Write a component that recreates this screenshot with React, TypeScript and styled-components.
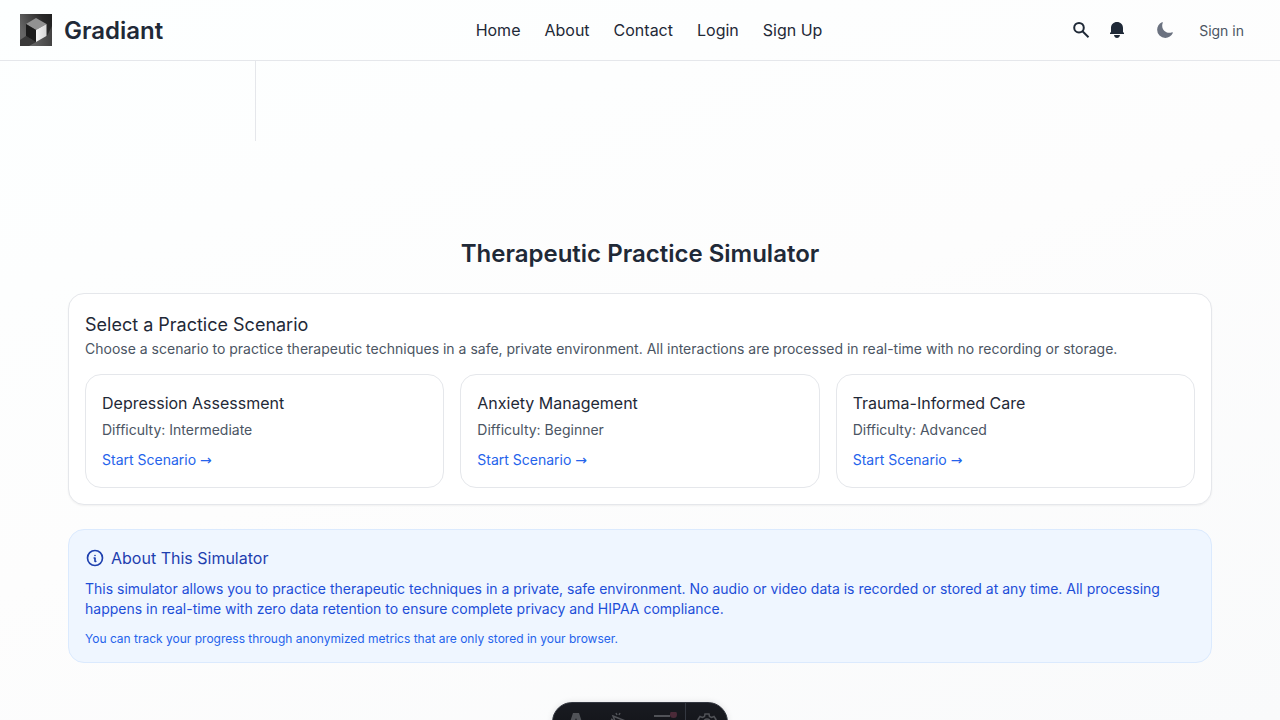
import React from "react";
import styled, { createGlobalStyle } from "styled-components";
import { IoMoon } from "react-icons/io5";
import { TbInfoCircle } from "react-icons/tb";

const GlobalStyle = createGlobalStyle`
  *, *::before, *::after { box-sizing: border-box; }
  html { min-height: 100%; background: #fff; }
  body {
    margin: 0;
    min-height: 100vh;
    background: linear-gradient(160deg, #fdffff 0%, #fdfdfd 50%, #f9fafb 100%);
    color: #1f2937;
    font: 16px/24px Inter, "Liberation Sans", sans-serif;
  }
  h1, h2, h3, p { margin: 0; font-weight: 400; }
  a { color: inherit; text-decoration: none; }
`;

const Header = styled.header`
  display: grid;
  grid-template-columns: 1fr auto 1fr;
  align-items: center;
  height: 61px;
  padding: 0 20px;
  border-bottom: 1px solid #e5e7eb;
`;

const Brand = styled.a`
  display: flex;
  align-items: center;
  gap: 12px;
  font-size: 24px;
  line-height: 32px;
  font-weight: 600;
`;

const BrandName = styled.span`
  padding-top: 1px;
`;

const Nav = styled.nav`
  display: flex;
  gap: 24px;
  padding-left: 18px;
`;

const Actions = styled.div`
  display: flex;
  align-items: center;
  justify-content: flex-end;
`;

const IconButton = styled.button<{ $muted?: boolean }>`
  display: flex;
  align-items: center;
  justify-content: center;
  width: 36px;
  height: 36px;
  margin-left: ${(p) => (p.$muted ? "12px" : "0")};
  padding: 0;
  border: 0;
  background: none;
  color: ${(p) => (p.$muted ? "#6b7280" : "#1f2937")};
  cursor: pointer;
`;

const SignIn = styled.a`
  padding: 9px 16px 7px;
  color: #4b5563;
  font-size: 14px;
  line-height: 20px;
`;

const SideRail = styled.aside`
  width: 256px;
  max-width: 100%;
  height: 80px;
  border-right: 1px solid #e5e7eb;
`;

const Main = styled.main`
  padding: 97px 68px 56px;
`;

const PageTitle = styled.h1`
  && { font-weight: 600; }
  margin-bottom: 23px;
  font-size: 24px;
  line-height: 32px;
  text-align: center;
`;

const Panel = styled.section`
  padding: 16px;
  border: 1px solid #e5e7eb;
  border-radius: 16px;
  background: #fff;
  box-shadow: 0 1px 2px rgba(0, 0, 0, 0.05);
`;

const PanelTitle = styled.h2`
  font-size: 18px;
  line-height: 29px;
`;

const Muted = styled.p`
  color: #4b5563;
  font-size: 14px;
  line-height: 20px;
`;

const Scenarios = styled.div`
  display: grid;
  grid-template-columns: repeat(3, 1fr);
  gap: 16px;
  margin-top: 15px;
`;

const Scenario = styled.article`
  display: flex;
  flex-direction: column;
  align-items: flex-start;
  padding: 16px 16px 15px;
  border: 1px solid #e5e7eb;
  border-radius: 16px;
`;

const ScenarioTitle = styled.h3`
  margin-bottom: 5px;
  font-size: 16px;
  line-height: 24px;
`;

const StartButton = styled.button`
  height: 24px;
  margin-top: 8px;
  padding: 0;
  border: 0;
  background: none;
  color: #2563eb;
  font: 14px/24px Inter, "Liberation Sans", sans-serif;
  cursor: pointer;
`;

const Arrow = styled.span`
  font-family: "DejaVu Sans", sans-serif;
  line-height: 20px;
`;

const Notice = styled.section`
  margin-top: 24px;
  padding: 16px 16px 15px;
  border: 1px solid #dbeafe;
  border-radius: 16px;
  background: #eff6ff;
  color: #1d4ed8;
  font-size: 14px;
  line-height: 20px;
`;

const NoticeTitle = styled.h2`
  display: flex;
  align-items: center;
  gap: 6px;
  margin-bottom: 9px;
  color: #1e40af;
  font-size: 16px;
  line-height: 24px;
`;

const NoticeSmall = styled.p`
  margin-top: 12px;
  color: #2563eb;
  font-size: 12px;
  line-height: 16px;
`;

const DevBar = styled.div`
  position: fixed;
  left: 50%;
  bottom: -22px;
  display: flex;
  height: 40px;
  overflow: hidden;
  transform: translateX(-50%);
  border: 1px solid #343841;
  border-radius: 20px;
  background: linear-gradient(180deg, #191b21, #111216);
  box-shadow: 0 0 6px rgba(0, 0, 0, 0.1);
`;

const DevButton = styled.button<{ $last?: boolean }>`
  display: flex;
  align-items: center;
  justify-content: center;
  width: ${(p) => (p.$last ? "42px" : "44px")};
  padding: 0 0 0 ${(p) => (p.$last ? "0" : "2px")};
  border: 0;
  border-left: ${(p) => (p.$last ? "1px solid #343841" : "0")};
  background: none;
  color: #505257;
`;

const Logo = () => (
  <svg width="32" height="32" viewBox="0 0 32 32" aria-hidden="true">
    <defs>
      <linearGradient id="logo-bg" x1="0" y1="0.4" x2="1" y2="0">
        <stop offset="0" stopColor="#666" />
        <stop offset="0.7" stopColor="#292929" />
        <stop offset="1" stopColor="#202020" />
      </linearGradient>
      <linearGradient id="logo-floor" x1="0" y1="0" x2="1" y2="0">
        <stop offset="0" stopColor="#6a6a6a" />
        <stop offset="1" stopColor="#424242" />
      </linearGradient>
      <linearGradient id="logo-face" x1="0" y1="0" x2="1" y2="0">
        <stop offset="0" stopColor="#f5f5f5" />
        <stop offset="1" stopColor="#d8d8d8" />
      </linearGradient>
    </defs>
    <path fill="url(#logo-bg)" d="M0 0h32v32H0z" />
    <path fill="url(#logo-floor)" d="M16 28 27 22l5-10v20H9z" />
    <path fill="#393939" d="m0 26 6-4 10 6-7 4H0z" />
    <path fill="#929292" d="M16 4 26.500 10 16 16 6 10z" />
    <path fill="#1b1b1b" d="m6 10 10 6v12L6 22z" />
    <path fill="url(#logo-face)" d="m16 16 10.500-6v12L16 28z" />
  </svg>
);

const SearchIcon = () => (
  <svg width="18" height="18" viewBox="0 0 18 18" fill="none" stroke="currentColor" strokeWidth="2" aria-hidden="true">
    <circle cx="7" cy="6.700" r="4.800" />
    <path d="m10.500 10.200 6 6" />
  </svg>
);

const BellIcon = () => (
  <svg width="18" height="18" viewBox="0 0 18 18" fill="currentColor" aria-hidden="true">
    <path d="M9 1c3.500 0 6 2.500 6 6v4l1 1v1H2v-1l1-1V7c0-3.500 2.500-6 6-6zM6 14h6c-.3 1.800-1.400 3-3 3s-2.700-1.200-3-3z" />
  </svg>
);

const scenarios = [
  { name: "Depression Assessment", level: "Intermediate" },
  { name: "Anxiety Management", level: "Beginner" },
  { name: "Trauma-Informed Care", level: "Advanced" },
];

const links = ["Home", "About", "Contact", "Login", "Sign Up"];

export default function App() {
  return (
    <>
      <GlobalStyle />
      <Header>
        <Brand href="#">
          <Logo />
          <BrandName>Gradiant</BrandName>
        </Brand>
        <Nav aria-label="Main">
          {links.map((label) => (
            <a key={label} href="#">{label}</a>
          ))}
        </Nav>
        <Actions>
          <IconButton aria-label="Search"><SearchIcon /></IconButton>
          <IconButton aria-label="Notifications"><BellIcon /></IconButton>
          <IconButton $muted aria-label="Toggle dark mode"><IoMoon size={18} /></IconButton>
          <SignIn href="#">Sign in</SignIn>
        </Actions>
      </Header>
      <SideRail />
      <Main>
        <PageTitle>Therapeutic Practice Simulator</PageTitle>
        <Panel>
          <PanelTitle>Select a Practice Scenario</PanelTitle>
          <Muted>
            Choose a scenario to practice therapeutic techniques in a safe, private environment. All
            interactions are processed in real-time with no recording or storage.
          </Muted>
          <Scenarios>
            {scenarios.map((s) => (
              <Scenario key={s.name}>
                <ScenarioTitle>{s.name}</ScenarioTitle>
                <Muted>Difficulty: {s.level}</Muted>
                <StartButton>Start Scenario <Arrow>→</Arrow></StartButton>
              </Scenario>
            ))}
          </Scenarios>
        </Panel>
        <Notice>
          <NoticeTitle><TbInfoCircle size={20} />About This Simulator</NoticeTitle>
          <p>
            This simulator allows you to practice therapeutic techniques in a private, safe
            environment. No audio or video data is recorded or stored at any time. All processing
            happens in real-time with zero data retention to ensure complete privacy and HIPAA
            compliance.
          </p>
          <NoticeSmall>
            You can track your progress through anonymized metrics that are only stored in your
            browser.
          </NoticeSmall>
        </Notice>
      </Main>
      <DevBar>
        <DevButton aria-label="Menu">
          <svg width="20" height="20" viewBox="0 0 20 20" fill="currentColor">
            <path d="M7 1h6l5 15-5-2-3-8-3 8-5 2zM7 16h6l-3 4z" />
          </svg>
        </DevButton>
        <DevButton aria-label="Inspect">
          <svg width="20" height="20" viewBox="0 0 20 20" fill="none" stroke="currentColor" strokeWidth="1.5">
            <path d="m3 4 15 6-6 2-3 7zM6 1l1 2M10 1 9 3M1 7l2 1" />
          </svg>
        </DevButton>
        <DevButton aria-label="Audit">
          <svg width="26" height="20" viewBox="0 0 26 20" fill="none" stroke="currentColor" strokeWidth="2">
            <path d="M3 4h16M3 10h10M3 16h8m4-3 3 3 6-7" />
            <circle cx="22.500" cy="2.500" r="3.500" fill="#4b2a38" stroke="none" />
          </svg>
        </DevButton>
        <DevButton $last aria-label="Settings">
          <svg width="20" height="20" viewBox="0 0 20 20" fill="none" stroke="currentColor" strokeWidth="1.500">
            <path d="M8 2h4l.5 2.500 2 1 2.500-1 2 3-2 2v2l2 2-2 3-2.500-1-2 1L12 19H8l-.5-2.500-2-1-2.500 1-2-3 2-2v-2l-2-2 2-3 2.500 1 2-1z" />
            <circle cx="10" cy="10" r="3" />
          </svg>
        </DevButton>
      </DevBar>
    </>
  );
}
